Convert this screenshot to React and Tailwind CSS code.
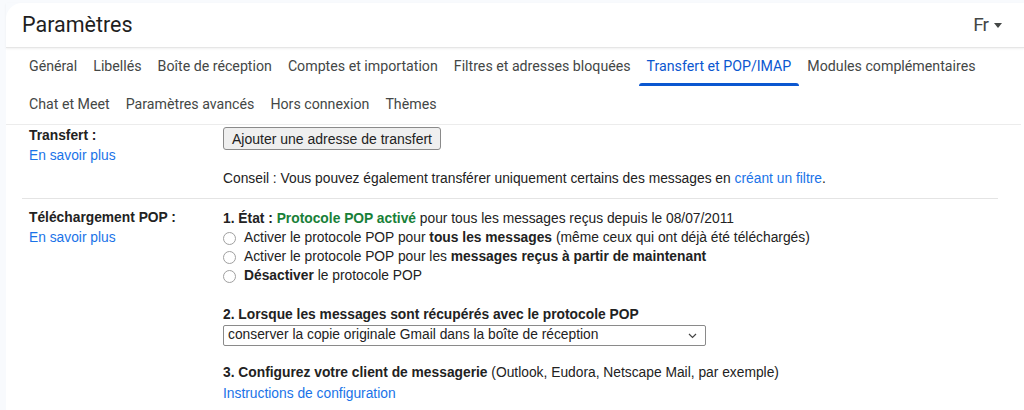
import React from "react";

const tabsRow1 = [
  "Général",
  "Libellés",
  "Boîte de réception",
  "Comptes et importation",
  "Filtres et adresses bloquées",
  "Transfert et POP/IMAP",
  "Modules complémentaires",
];
const tabsRow2 = ["Chat et Meet", "Paramètres avancés", "Hors connexion", "Thèmes"];

const Tab = ({ label, active }) => (
  <div className="relative flex h-[38px] items-center px-2">
    <span className={active ? "text-[#0b57d0]" : "text-[#444746]"}>{label}</span>
    {active && <div className="absolute bottom-0 left-0 right-0 h-[3px] rounded-t-sm bg-[#0b57d0]" />}
  </div>
);

const Radio = ({ children }) => (
  <div className="flex h-[19px] items-center">
    <span className="mr-2 h-[13px] w-[13px] rounded-full border border-[#a0a0a0] bg-white" />
    <span>{children}</span>
  </div>
);

export default function App() {
  return (
    <div className="min-h-[410px] w-full bg-[#f8fafd] pl-[6px] pt-[3px]">
      <div className="min-h-[407px] rounded-tl-2xl bg-white">
        {/* header */}
        <div className="flex h-[45px] items-center justify-between border-b border-[#e6e6e6] pl-4 pr-[22px] shadow-[0_1px_2px_rgba(0,0,0,0.06)]" style={{ fontFamily: "Roboto, sans-serif" }}>
          <h1 className="text-[21.5px] text-[#1f1f1f]">Paramètres</h1>
          <div className="flex items-center gap-[6px] text-[19px] text-[#444746]">
            <span className="tracking-[-1px]">Fr</span>
            <svg width="8" height="5" viewBox="0 0 8 5"><path d="M0 0h8L4 5z" fill="#444746" /></svg>
          </div>
        </div>

        {/* tabs */}
        <div className="mr-[3px] border-b border-[#ececec] pl-[15px] text-[14.2px]" style={{ fontFamily: "Roboto, sans-serif" }}>
          <div className="flex">
            {tabsRow1.map((t) => (
              <Tab key={t} label={t} active={t === "Transfert et POP/IMAP"} />
            ))}
          </div>
          <div className="flex">
            {tabsRow2.map((t) => (
              <Tab key={t} label={t} />
            ))}
          </div>
        </div>

        {/* content */}
        <div className="ml-4 w-[976px] text-[13.8px] text-[#222]" style={{ fontFamily: '"Liberation Sans", Arial, sans-serif' }}>
          <div className="flex border-b border-[#e4e4e4] pb-[9px]">
            <div className="w-[201px] pl-[7px] pt-[1px] leading-[20px]">
              <div className="font-bold">Transfert :</div>
              <div className="text-[#1a73e8]">En savoir plus</div>
            </div>
            <div className="flex-1">
              <button className="mt-[2px] h-[23px] rounded-[3px] border border-[#8a8a8a] bg-[#efefef] px-[8px] text-[14px] leading-[20px] text-[#222]">
                Ajouter une adresse de transfert
              </button>
              <div className="mt-[19px] leading-[20px]">
                Conseil : Vous pouvez également transférer uniquement certains des messages en{" "}
                <span className="text-[#1a73e8]">créant un filtre</span>.
              </div>
            </div>
          </div>

          <div className="flex pt-[9px]">
            <div className="w-[201px] pl-[7px]">
              <div className="font-bold leading-[20px]">Téléchargement POP :</div>
              <div className="leading-[19px] text-[#1a73e8]">En savoir plus</div>
            </div>
            <div className="flex-1">
              <div className="leading-[21px]">
                <b>1. État : </b>
                <b className="text-[#188038]">Protocole POP activé</b> pour tous les messages reçus depuis le 08/07/2011
              </div>
              <Radio>
                Activer le protocole POP pour <b>tous les messages</b> (même ceux qui ont déjà été téléchargés)
              </Radio>
              <Radio>
                Activer le protocole POP pour les <b>messages reçus à partir de maintenant</b>
              </Radio>
              <Radio>
                <b>Désactiver</b> le protocole POP
              </Radio>

              <div className="mt-[19px] font-bold leading-[20px]">
                2. Lorsque les messages sont récupérés avec le protocole POP
              </div>
              <div className="flex h-[21px] w-[483px] items-center justify-between rounded-[2px] border border-[#8a8a8a] bg-white pl-[4px] pr-[8px]">
                <span>conserver la copie originale Gmail dans la boîte de réception</span>
                <svg width="9" height="6" viewBox="0 0 9 6"><path d="M1 1l3.5 3.5L8 1" fill="none" stroke="#444" strokeWidth="1.2" /></svg>
              </div>

              <div className="mt-[17px] leading-[20px]">
                <b>3. Configurez votre client de messagerie</b> (Outlook, Eudora, Netscape Mail, par exemple)
              </div>
              <div className="leading-[22px] text-[#1a73e8]">Instructions de configuration</div>
            </div>
          </div>
        </div>
      </div>
    </div>
  );
}
